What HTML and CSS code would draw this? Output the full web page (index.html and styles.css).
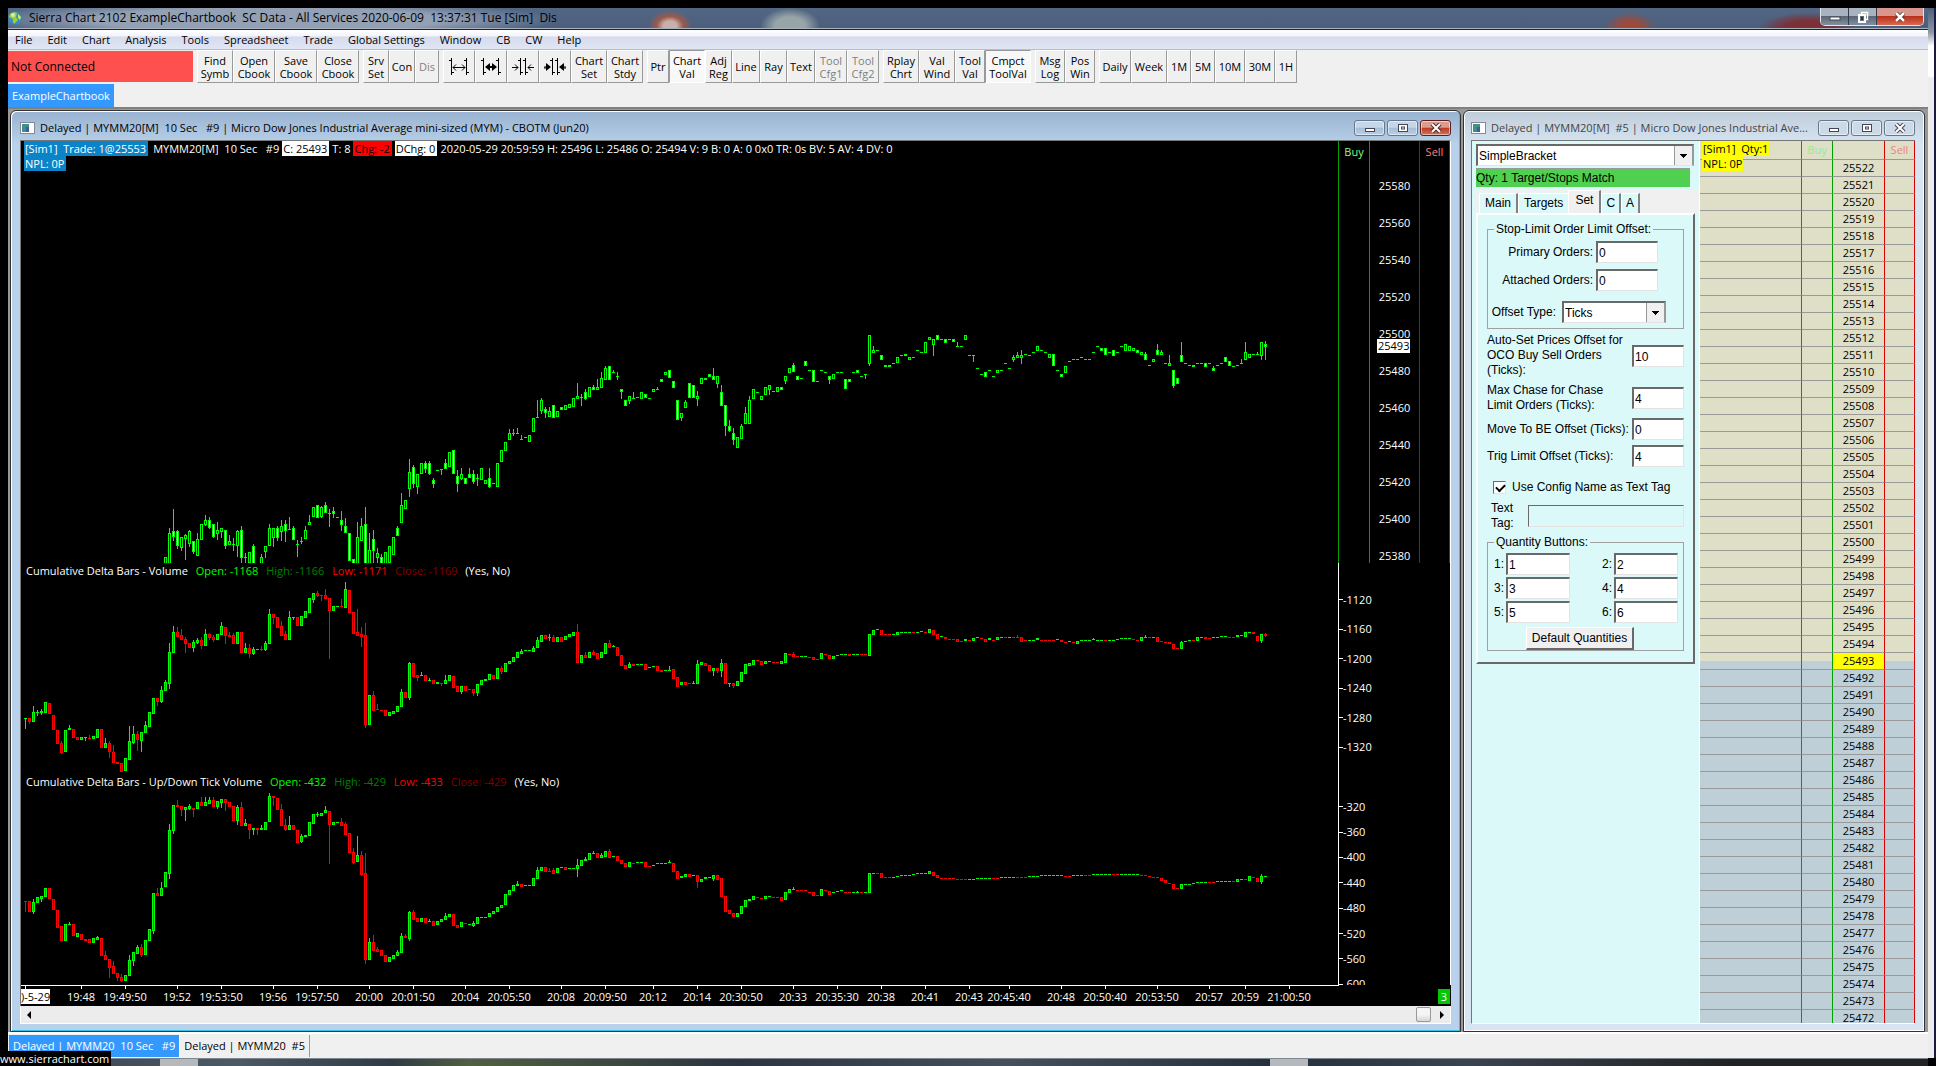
FILE: index.html
```html
<!DOCTYPE html>
<html lang="en">
<head>
    <meta charset="UTF-8">
    <meta name="viewport" content="width=device-width, initial-scale=1.0">
    <title>Sierra Chart 2102 ExampleChartbook</title>
    <link rel="stylesheet" href="styles.css">
</head>
<body>
    <div class="screen">
        <div class="app">
            <header class="titlebar">
                <svg class="app-icon" width="14" height="14" viewBox="0 0 14 14">
                    <circle cx="7" cy="7" r="6.5" fill="#2f8fd0"/>
                    <path d="M2 3 Q6 0 9 2 L8 6 L10 9 L6 13 Q4 10 5 8 L1 6 Z" fill="#9fd02e"/>
                    <path d="M10 3 L13 6 L12 9 L10 7 Z" fill="#d8e84a"/>
                    <circle cx="5" cy="4" r="2" fill="#ffffff" opacity=".6"/>
                </svg>
                <h1>Sierra Chart 2102 ExampleChartbook&nbsp; SC Data - All Services 2020-06-09&nbsp; 13:37:31 Tue [Sim]&nbsp; Dis</h1>
                <div class="caption-buttons">
                    <button aria-label="Minimize"><svg width="12" height="10"><rect x="1" y="5" width="10" height="3" fill="#fff" stroke="#444b55"/></svg></button>
                    <button aria-label="Restore"><svg width="12" height="12"><path d="M4.500 3V1.500H10.500V8.500H9" fill="none" stroke="#fff" stroke-width="1.500"/><rect x="2" y="4" width="6" height="7" fill="none" stroke="#fff" stroke-width="2"/><rect x="4" y="6" width="2" height="3" fill="#333"/></svg></button>
                    <button class="close" aria-label="Close"><svg width="12" height="10"><path d="M2 1 L10 9 M10 1 L2 9" stroke="#4d2a2a" stroke-width="4"/><path d="M2 1 L10 9 M10 1 L2 9" stroke="#fff" stroke-width="2.500"/></svg></button>
                </div>
            </header>

            <nav class="menu">
                <a href="#">File</a><a href="#">Edit</a><a href="#">Chart</a><a href="#">Analysis</a><a href="#">Tools</a><a href="#">Spreadsheet</a><a href="#">Trade</a><a href="#">Global Settings</a><a href="#">Window</a><a href="#">CB</a><a href="#">CW</a><a href="#">Help</a>
            </nav>

            <div class="toolbar">
                <div class="status">Not Connected</div>
                <div class="group">
                    <button class="w36">Find<br>Symb</button>
                    <button class="w42">Open<br>Cbook</button>
                    <button class="w42">Save<br>Cbook</button>
                    <button class="w42">Close<br>Cbook</button>
                </div>
                <div class="group">
                    <button class="w26">Srv<br>Set</button>
                    <button class="w26">Con</button>
                    <button class="w24" disabled>Dis</button>
                </div>
                <div class="group">
                    <button class="w32" aria-label="Widen bars"><svg width="20" height="24"><path d="M2.500 3V20M0 5.500H2M3 17.500H5M17.500 3V20M15 5.500H17M18 17.500H20M4 12.500H16M7 9.500L4 12.500L7 15.500M13 9.500L16 12.500L13 15.500"/></svg></button>
                    <button class="w32" aria-label="Widen range"><svg width="20" height="24"><path d="M2.500 3V20M0 5.500H2M3 17.500H5M17.500 3V20M15 5.500H17M18 17.500H20M5 12.500H15M5 11.500H15"/><path class="solid" d="M4 12L9 8V16ZM16 12L11 8V16Z"/></svg></button>
                    <button class="w32" aria-label="Narrow bars"><svg width="24" height="24"><path d="M9.500 3V20M7 5.500H9M10 17.500H12M14.500 3V20M12 5.500H14M15 17.500H17M1 12.500H7M4 9.500L7 12.500L4 15.500M23 12.500H17M20 9.500L17 12.500L20 15.500"/></svg></button>
                    <button class="w32" aria-label="Narrow range"><svg width="24" height="24"><path d="M9.500 3V20M7 5.500H9M10 17.500H12M14.500 3V20M12 5.500H14M15 17.500H17M1 12H4M20 12H23M1 13H4M20 13H23"/><path class="solid" d="M8 12L3 8V16ZM16 12L21 8V16Z"/></svg></button>
                    <button class="w36">Chart<br>Set</button>
                    <button class="w36">Chart<br>Stdy</button>
                </div>
                <div class="group">
                    <button class="w22">Ptr</button>
                    <button class="w36 pressed">Chart<br>Val</button>
                    <button class="w27">Adj<br>Reg</button>
                    <button class="w28">Line</button>
                    <button class="w27">Ray</button>
                    <button class="w28">Text</button>
                    <button class="w32" disabled>Tool<br>Cfg1</button>
                    <button class="w32" disabled>Tool<br>Cfg2</button>
                </div>
                <div class="group">
                    <button class="w36">Rplay<br>Chrt</button>
                    <button class="w36">Val<br>Wind</button>
                    <button class="w30">Tool<br>Val</button>
                    <button class="w46 pressed">Cmpct<br>ToolVal</button>
                </div>
                <div class="group">
                    <button class="w30">Msg<br>Log</button>
                    <button class="w30">Pos<br>Win</button>
                </div>
                <div class="group">
                    <button class="w32">Daily</button>
                    <button class="w36">Week</button>
                    <button class="w24">1M</button>
                    <button class="w24">5M</button>
                    <button class="w30">10M</button>
                    <button class="w30">30M</button>
                    <button class="w22">1H</button>
                </div>
            </div>

            <div class="books"><button class="book">ExampleChartbook</button></div>

            <main class="mdi">
                <section class="window active">
                    <div class="window-title">
                        <svg width="15" height="12"><rect x=".5" y=".5" width="14" height="11" fill="#fff" stroke="#889"/><rect x="2" y="2" width="7" height="8" fill="#3f8f8a"/><rect x="6" y="5" width="3" height="5" fill="#3c5fa0"/></svg>
                        <h2>Delayed | MYMM20[M]&nbsp; 10 Sec&nbsp;&nbsp; #9 | Micro Dow Jones Industrial Average mini-sized (MYM) - CBOTM (Jun20)</h2>
                        <div class="window-buttons">
                            <button aria-label="Minimize"><svg width="12" height="10"><rect x="1.500" y="5.500" width="9" height="3" fill="#fff" stroke="#445"/></svg></button>
                            <button aria-label="Maximize"><svg width="12" height="10"><rect x="1.500" y="1.500" width="9" height="7" fill="#fff" stroke="#445"/><rect x="4.500" y="4" width="3" height="2" fill="#fff" stroke="#445"/></svg></button>
                            <button class="close" aria-label="Close"><svg width="12" height="10"><path d="M2 1 L10 9 M10 1 L2 9" stroke="#4d2a2a" stroke-width="4"/><path d="M2 1 L10 9 M10 1 L2 9" stroke="#fff" stroke-width="2"/></svg></button>
                        </div>
                    </div>
                    <div class="client chart">
                        <div class="panes plot">
                            <svg id="bars" class="bars"></svg>
                            <div class="pane">
                                <p class="info"><mark class="sim">[Sim1]&nbsp; Trade: 1@25553</mark><span class="symbol">MYMM20[M]&nbsp; 10 Sec&nbsp;&nbsp; #9</span><mark>C: 25493</mark><span>T: 8</span><mark class="chg">Chg: -2</mark><mark>DChg: 0</mark><span>2020-05-29 20:59:59 H: 25496 L: 25486 O: 25494 V: 9 B: 0 A: 0 0x0 TR: 0s BV: 5 AV: 4 DV: 0</span></p>
                                <p class="info"><mark class="sim">NPL: 0P</mark></p>
                            </div>
                            <div class="pane">
                                <p class="study">Cumulative Delta Bars - Volume <b class="open">Open: -1168</b> <b class="high">High: -1166</b> <b class="low">Low: -1171</b> <b class="last">Close: -1169</b> <b>(Yes, No)</b></p>
                            </div>
                            <div class="pane">
                                <p class="study">Cumulative Delta Bars - Up/Down Tick Volume <b class="open">Open: -432</b> <b class="high">High: -429</b> <b class="low">Low: -433</b> <b class="last">Close: -429</b> <b>(Yes, No)</b></p>
                            </div>
                        </div>
                        <div class="panes scales">
                            <div class="pane prices">
                                <div class="buy">Buy</div>
                                <div class="ticks">
                                    <span>25580</span><span>25560</span><span>25540</span><span>25520</span><span>25500</span><span>25480</span><span>25460</span><span>25440</span><span>25420</span><span>25400</span><span>25380</span>
                                    <mark class="last-price">25493</mark>
                                </div>
                                <div class="sell">Sell</div>
                            </div>
                            <div class="pane scale volume"><span>-1120</span><span>-1160</span><span>-1200</span><span>-1240</span><span>-1280</span><span>-1320</span></div>
                            <div class="pane scale tick-volume"><span>-320</span><span>-360</span><span>-400</span><span>-440</span><span>-480</span><span>-520</span><span>-560</span><span>-600</span></div>
                        </div>
                    </div>
                    <div class="times">
                        <svg id="times" class="time-labels"></svg>
                        <mark class="date">)-5-29</mark>
                        <mark class="count">3</mark>
                    </div>
                    <div class="scrollbar">
                        <button aria-label="Scroll left"><svg width="5" height="8"><path d="M4 0V8L0 4Z"/></svg></button>
                        <button class="thumb" aria-label="Scroll"></button>
                        <button aria-label="Scroll right"><svg width="5" height="8"><path d="M1 0V8L5 4Z"/></svg></button>
                    </div>
                </section>

                <section class="window dom">
                    <div class="window-title">
                        <svg width="15" height="12"><rect x=".5" y=".5" width="14" height="11" fill="#fff" stroke="#889"/><rect x="2" y="2" width="7" height="8" fill="#3f8f8a"/><rect x="6" y="5" width="3" height="5" fill="#3c5fa0"/></svg>
                        <h2>Delayed | MYMM20[M]&nbsp; #5 | Micro Dow Jones Industrial Ave...</h2>
                        <div class="window-buttons">
                            <button aria-label="Minimize"><svg width="12" height="10"><rect x="1.500" y="5.500" width="9" height="3" fill="#fff" stroke="#445"/></svg></button>
                            <button aria-label="Maximize"><svg width="12" height="10"><rect x="1.500" y="1.500" width="9" height="7" fill="#fff" stroke="#445"/><rect x="4.500" y="4" width="3" height="2" fill="#fff" stroke="#445"/></svg></button>
                            <button aria-label="Close"><svg width="12" height="10"><path d="M2 1 L10 9 M10 1 L2 9" stroke="#445" stroke-width="4"/><path d="M2 1 L10 9 M10 1 L2 9" stroke="#fff" stroke-width="2"/></svg></button>
                        </div>
                    </div>
                    <div class="client trade">
                        <form class="config">
                            <select class="bracket" aria-label="Trade configuration"><option>SimpleBracket</option></select>
                            <p class="match">Qty: 1 Target/Stops Match</p>
                            <div class="tabs">
                                <button type="button">Main</button><button type="button">Targets</button><button type="button" class="selected">Set</button><button type="button">C</button><button type="button">A</button>
                            </div>
                            <div class="sheet">
                                <fieldset class="limits">
                                    <legend>Stop-Limit Order Limit Offset:</legend>
                                    <div class="row"><label for="primary">Primary Orders:</label><input id="primary" value="0"></div>
                                    <div class="row"><label for="attached">Attached Orders:</label><input id="attached" value="0"></div>
                                    <div class="row offset"><label for="type">Offset Type:</label><select id="type"><option>Ticks</option></select></div>
                                </fieldset>
                                <div class="row split"><label for="oco">Auto-Set Prices Offset for<br>OCO Buy Sell Orders<br>(Ticks):</label><input id="oco" value="10"></div>
                                <div class="row split"><label for="chase">Max Chase for Chase<br>Limit Orders (Ticks):</label><input id="chase" value="4"></div>
                                <div class="row split"><label for="be">Move To BE Offset (Ticks):</label><input id="be" value="0"></div>
                                <div class="row split"><label for="trig">Trig Limit Offset (Ticks):</label><input id="trig" value="4"></div>
                                <div class="row check"><input id="use-name" type="checkbox" checked><label for="use-name">Use Config Name as Text Tag</label></div>
                                <div class="row tag"><label for="tag">Text<br>Tag:</label><input id="tag" disabled></div>
                                <fieldset class="quantities">
                                    <legend>Quantity Buttons:</legend>
                                    <div class="grid">
                                        <label for="q1">1:</label><input id="q1" value="1"><label for="q2">2:</label><input id="q2" value="2">
                                        <label for="q3">3:</label><input id="q3" value="3"><label for="q4">4:</label><input id="q4" value="4">
                                        <label for="q5">5:</label><input id="q5" value="5"><label for="q6">6:</label><input id="q6" value="6">
                                    </div>
                                    <button type="button" class="defaults">Default Quantities</button>
                                </fieldset>
                            </div>
                        </form>
                        <div class="ladder">
                            <table>
                                <thead><tr><th></th><th class="buy">Buy</th><th></th><th class="sell">Sell</th></tr></thead>
                                <tbody id="ladder"></tbody>
                            </table>
                            <p class="position"><mark>[Sim1]&nbsp; Qty:1</mark><br><mark>NPL: 0P</mark></p>
                        </div>
                    </div>
                </section>
            </main>

            <footer class="window-tabs">
                <button class="selected">Delayed | MYMM20&nbsp; 10 Sec&nbsp;&nbsp; #9</button><button>Delayed | MYMM20&nbsp; #5</button>
            </footer>
        </div>
        <div class="desktop"></div>
    </div>
    <div class="taskbar"><i></i><i></i></div>
    <p class="url">www.sierrachart.com</p>
    <script src="charts.js"></script>
</body>
</html>
```

FILE: styles.css
```css
* {
    box-sizing: border-box;
}
body {
    margin: 0;
    padding-top: 8px;
    height: 100vh;
    display: flex;
    flex-direction: column;
    overflow: hidden;
    background-color: #000;
    color: #000;
    font-family: "Open Sans", "Noto Sans", sans-serif;
    font-size: 12px;
    line-height: 16px;
}
h1, h2, p {
    margin: 0;
    font-size: 12px;
    font-weight: normal;
    white-space: nowrap;
}
button {
    margin: 0;
    padding: 0;
    border: none;
    font: inherit;
    color: inherit;
    background: none;
}
b {
    font-weight: normal;
}
mark {
    color: #000;
    background-color: #fff;
}
.screen {
    flex: 1;
    min-height: 0;
    display: flex;
    padding-left: 8px;
}
.app {
    flex: 1;
    min-width: 0;
    display: flex;
    flex-direction: column;
    background-color: #f0f0f0;
}
.desktop {
    width: 8px;
    border-right: 2px solid #1a1a40;
    background: linear-gradient(#4d6079 0, #8a95a0 24px, #fff 38px, #fff 68px, #ececec 70px);
}

/* title bar */
.titlebar {
    height: 21px;
    display: flex;
    align-items: center;
    gap: 7px;
    background:
        radial-gradient(ellipse 290px 20px at 260px 12px, rgba(165, 175, 192, .8) 60%, transparent),
        radial-gradient(ellipse 22px 16px at 662px 18px, #c9b0aa 30%, #9a5a4c 60%, transparent),
        radial-gradient(ellipse 30px 18px at 782px 18px, #98a5a8 50%, transparent),
        radial-gradient(ellipse 26px 16px at 1622px 20px, #9c4a3c 40%, transparent),
        radial-gradient(ellipse 50px 18px at 1800px 22px, #7c3038 50%, transparent),
        linear-gradient(#526784, #4b5f7c);
    border-bottom: 1px solid #aab4c0;
}
.titlebar .caption-buttons {
    display: flex;
    align-self: flex-start;
    margin: 0 4px 0 auto;
    border: 1px solid #e0e5ea;
    border-top: none;
    border-radius: 0 0 5px 5px;
    overflow: hidden;
}
.caption-buttons button {
    width: 28px;
    height: 17px;
    display: flex;
    align-items: center;
    justify-content: center;
    border-right: 1px solid #333d4a;
    background: linear-gradient(#a9b3bf 45%, #5a6675 50%, #8190a0);
}
.caption-buttons .close {
    width: 46px;
    border: none;
    background: linear-gradient(#d9968a 45%, #b8311c 50%, #d9694e);
}

/* menu */
.menu {
    height: 21px;
    display: flex;
    align-items: center;
    gap: 15px;
    padding-left: 7px;
    border-top: 1px solid #222;
    border-bottom: 1px solid #b6bcd0;
    background: linear-gradient(#fff 0, #f2f4fa 6px, #d6dbed 7px, #e1e6f5);
}
.menu a {
    color: #000;
    text-decoration: none;
    font-size: 11px;
}

/* toolbar */
.toolbar {
    height: 34px;
    display: flex;
    gap: 4px;
    padding-bottom: 1px;
    font-size: 11px;
    line-height: 13px;
}
.toolbar .status {
    width: 185px;
    margin: 1px 0;
    padding-left: 3px;
    display: flex;
    align-items: center;
    background-color: #ff5050;
    font-size: 12px;
}
.group {
    display: flex;
}
.group button {
    border: 1px solid #fff;
    border-right-color: #999;
    border-bottom-color: #999;
    display: flex;
    align-items: center;
    justify-content: center;
    text-align: center;
}
.group .pressed {
    border-color: #999 #fff #fff #999;
    background-color: #f8f8f8;
}
.group button:disabled {
    color: #808080;
}
.group svg {
    fill: none;
    stroke: #000;
}
.group .solid {
    fill: #000;
    stroke: none;
}
.w22 { width: 22px; }
.w24 { width: 24px; }
.w26 { width: 26px; }
.w27 { width: 27px; }
.w28 { width: 28px; }
.w30 { width: 30px; }
.w32 { width: 32px; }
.w36 { width: 36px; }
.w42 { width: 42px; }
.w46 { width: 46px; }

.books {
    height: 23px;
    display: flex;
}
.book {
    padding: 0 4px;
    background-color: #3399ff;
    color: #fff;
    font-size: 11px;
}

/* MDI windows */
.mdi {
    flex: 1;
    min-height: 0;
    display: flex;
    gap: 2px;
    padding: 1px 3px 0 2px;
    border-top: 2px solid #808080;
    border-bottom: 2px solid #fff;
    background-color: #999;
}
.window {
    display: flex;
    flex-direction: column;
    padding: 0 9px 7px 7px;
    border: 1px solid #333;
    border-radius: 6px 6px 0 0;
    box-shadow: inset 0 0 0 1px #fff;
    background: linear-gradient(#c0cdd9, #d7e4f2 34px);
    color: #444;
}
.window.active {
    flex: 1;
    min-width: 0;
    padding: 0 9px 7px;
    box-shadow: inset 1px 1px 0 #fff, inset -1px -1px 0 #35c5e8;
    background: linear-gradient(#98b2d0, #b9d1ea 34px);
    color: #000;
}
.dom {
    width: 462px;
}
.window-title {
    height: 29px;
    display: flex;
    align-items: center;
    gap: 5px;
    padding: 4px 0 0;
}
.window-title h2 {
    flex: 1;
    min-width: 0;
    overflow: hidden;
    font-size: 11px;
}
.window-buttons {
    display: flex;
    gap: 2px;
}
.window-buttons button {
    width: 31px;
    height: 16px;
    display: flex;
    align-items: center;
    justify-content: center;
    border: 1px solid #66788c;
    border-radius: 3px;
    box-shadow: inset 0 0 0 1px rgba(255, 255, 255, .5);
    background: linear-gradient(#c5d6e8 45%, #a5bdd6 50%, #b9d0e6);
}
.dom .window-buttons button {
    background: #ccd9e6;
}
.window-buttons .close {
    border-color: #5b2020;
    background: linear-gradient(#dd9c8f 45%, #bb3a24 50%, #d5715a);
}
.client {
    flex: 1;
    min-height: 0;
    display: flex;
    border: 1px solid #777;
    border-bottom: none;
}

/* chart */
.chart {
    background-color: #000;
    color: #fff;
    font-size: 11px;
    border-right-color: #fff;
}
.panes {
    position: relative;
    display: grid;
    grid-template-rows: minmax(0, 2fr) minmax(0, 1fr) minmax(0, 1fr);
}
.plot {
    flex: 1;
    min-width: 0;
}
.scales {
    width: 112px;
}
.bars {
    position: absolute;
    width: 100%;
    height: 100%;
}
.bars path {
    shape-rendering: crispEdges;
}
.pane {
    position: relative;
    min-width: 0;
}
.info {
    display: flex;
    gap: 3px;
    padding-left: 3px;
    font-size: 11px;
    line-height: 15px;
}
.info mark {
    padding: 0 2px 0 1px;
}
.info .sim {
    background-color: #0a84c8;
    color: #fff;
}
.info .symbol {
    padding-left: 2px;
}
.info .chg {
    background-color: #ff0000;
}
.study {
    padding-left: 5px;
    font-size: 11px;
}
.study b {
    margin-left: 5px;
}
.study .open { color: #00ff00; }
.study .high { color: #008000; }
.study .low { color: #ff0000; }
.study .last { color: #800000; }

.prices {
    display: flex;
    overflow: hidden;
    border-left: 1px solid #00a000;
}
.prices .buy, .prices .sell {
    width: 31px;
    padding-top: 3px;
    border-right: 1px solid #00a000;
    text-align: center;
    color: #80ff80;
}
.prices .sell {
    border-left: 1px solid #c80000;
    border-right-color: #c80000;
    color: #ff8080;
}
.ticks {
    position: relative;
    flex: 1;
    display: flex;
    flex-direction: column;
    padding-top: 26px;
    margin-bottom: -12px;
}
.ticks span, .scale span {
    flex: 1 0 0;
    display: flex;
    align-items: center;
}
.ticks span {
    justify-content: center;
}
.last-price {
    position: absolute;
    top: 198px;
    left: 7px;
    padding: 0 1px;
    line-height: 14px;
}
.scale {
    display: flex;
    flex-direction: column;
    overflow: hidden;
    border-left: 1px solid #fff;
}
.scale span::before {
    content: "";
    width: 4px;
    height: 1px;
    background-color: #fff;
}
.volume {
    padding: 22px 0 12px;
}
.tick-volume {
    padding-top: 20px;
    margin-bottom: -12px;
}
.times {
    position: relative;
    height: 21px;
    border-left: 1px solid #777;
    background-color: #000;
}
.time-labels {
    width: 100%;
    height: 100%;
    display: block;
}
.time-labels text {
    fill: #fff;
    font-size: 11px;
    text-anchor: middle;
}
.time-labels path {
    stroke: #fff;
    fill: none;
    shape-rendering: crispEdges;
}
.date, .count {
    position: absolute;
    left: 0;
    top: 4px;
    line-height: 15px;
    font-size: 11px;
}
.count {
    left: auto;
    right: 1px;
    padding: 0 3px;
    background-color: #00c800;
    color: #fff;
}
.scrollbar {
    height: 18px;
    display: flex;
    justify-content: space-between;
    border: 1px solid #fff;
    border-top: none;
    background-color: #ececec;
}
.scrollbar button {
    width: 17px;
}
.scrollbar .thumb {
    width: 15px;
    margin: 1px 2px 1px auto;
    border: 1px solid #999;
    border-radius: 2px;
    background: linear-gradient(#f5f5f5 50%, #d5d5d5);
}

/* trade panel */
.trade {
    color: #000;
    border-bottom: 1px solid #fff;
    border-right: none;
}
.config {
    width: 228px;
    padding: 3px 4px;
    background-color: #dbf9f9;
    border-right: 1px solid #fff;
    font-family: "Liberation Sans", Arial, sans-serif;
    line-height: 15px;
}
.config input, .config select {
    height: 22px;
    margin: 0;
    border: 2px solid #696969;
    border-right: 1px solid #e3e3e3;
    border-bottom: 1px solid #e3e3e3;
    border-radius: 0;
    background-color: #fff;
    color: #000;
    font: inherit;
    padding: 1px 1px 0;
}
.config select {
    appearance: none;
    border-right: 2px solid #999;
    background:
        linear-gradient(#000, #000) right 5px top 8px / 7px 1px no-repeat,
        linear-gradient(#000, #000) right 6px top 9px / 5px 1px no-repeat,
        linear-gradient(#000, #000) right 7px top 10px / 3px 1px no-repeat,
        linear-gradient(#000, #000) right 8px top 11px / 1px 1px no-repeat,
        linear-gradient(#999, #999) right 17px top 0 / 1px 100% no-repeat,
        linear-gradient(#f0f0f0, #f0f0f0) right top / 17px 100% no-repeat,
        #fff;
}
.config .bracket {
    width: 218px;
    display: block;
}
.match {
    width: 214px;
    margin: 2px 0 3px;
    padding: 1px 0;
    border-top: 1px solid #999;
    background-color: #50d050;
    line-height: 16px;
}
.tabs {
    display: flex;
    align-items: flex-end;
    padding-left: 3px;
    margin-right: -4px;
    background-color: #f0f0f0;
}
.tabs button {
    height: 20px;
    padding: 0 4px;
    border-left: 1px solid #fff;
    border-top: 1px solid #fff;
    border-right: 2px solid #808080;
    background-color: #dbf9f9;
}
.tabs button:nth-child(-n + 2) {
    padding: 0 5px;
}
.tabs button:nth-child(2) {
    border-right: none;
}
.tabs .selected {
    height: 23px;
    padding: 0 6px 4px;
    background-color: #f0f0f0;
}
.sheet {
    width: 219px;
    height: 451px;
    display: flex;
    flex-direction: column;
    gap: 4px;
    padding: 7px 9px;
    border: 2px solid #fff;
    border-right-color: #696969;
    border-bottom-color: #696969;
}
.config fieldset {
    margin: 0;
    padding: 0;
    border: 1px solid #a0a0a0;
    min-width: 0;
}
.config legend {
    margin-left: 6px;
    padding: 0 2px;
}
.row {
    display: flex;
    align-items: center;
    gap: 3px;
}
.limits {
    height: 107px;
}
.limits .row {
    justify-content: flex-end;
    margin: 4px 25px 6px 0;
    white-space: nowrap;
}
.limits input {
    width: 62px;
}
.limits .offset {
    margin: 10px 17px 0 0;
    gap: 6px;
}
.limits select {
    width: 104px;
}
.split {
    justify-content: space-between;
    margin-bottom: 1px;
    white-space: nowrap;
}
.split input {
    width: 52px;
}
.check {
    gap: 6px;
    padding: 8px 0 2px 6px;
}
.config .check input {
    appearance: none;
    width: 13px;
    height: 13px;
    border-width: 1px;
    padding: 0;
}
.check input:checked::before {
    content: "";
    display: block;
    width: 7px;
    height: 4px;
    margin: 2px 0 0 2px;
    border-left: 2px solid #000;
    border-bottom: 2px solid #000;
    transform: rotate(-45deg);
}
.tag {
    gap: 14px;
    padding-left: 4px;
}
.tag input {
    flex: 1;
    min-width: 0;
}
.config .tag input:disabled {
    background-color: #dbf9f9;
    border-width: 1px;
}
.grid {
    display: grid;
    grid-template-columns: 16px 64px 40px 64px;
    gap: 2px;
    align-items: center;
    text-align: right;
    padding-top: 3px;
}
.grid input {
    min-width: 0;
}
.defaults {
    display: block;
    width: 108px;
    height: 23px;
    margin: 4px 0 0 38px;
    border: 1px solid #fff;
    border-right: 2px solid #696969;
    border-bottom: 2px solid #696969;
    background-color: #f0f0f0;
    white-space: nowrap;
}

/* price ladder */
.ladder {
    position: relative;
    flex: 1;
    min-width: 0;
    overflow: hidden;
    font-size: 11px;
    line-height: 16px;
    background-color: #dfdec7;
}
.ladder table {
    width: 100%;
    table-layout: fixed;
    border-collapse: separate;
    border-spacing: 0;
    text-align: center;
}
.ladder th, .ladder td {
    height: 17px;
    padding: 0;
    border-bottom: 1px solid #999;
    border-right: 1px solid #00a000;
    font-weight: normal;
}
.ladder th {
    height: 19px;
}
.ladder th:nth-child(1) { width: 102px; }
.ladder th:nth-child(2) { width: 31px; }
.ladder th:nth-child(3) { width: 52px; }
.ladder th:nth-child(n + 3), .ladder td:nth-child(n + 3) {
    border-right-color: #d80000;
}
.ladder .buy {
    color: #90ee90;
}
.ladder .sell {
    color: #f08080;
}
.ladder .last td {
    background: linear-gradient(#dfdec7 8px, #bfcfd8 8px);
}
.ladder .last td:nth-child(3) {
    background: #ffff00;
}
.ladder .below td {
    background-color: #bfcfd8;
}
.position {
    position: absolute;
    left: 2px;
    top: 0;
    font-size: 11px;
    line-height: 15px;
}
.position mark {
    padding: 0 1px;
    background-color: #ffff00;
}

/* bottom tabs */
.window-tabs {
    height: 24px;
    display: flex;
    font-size: 11px;
    padding: 1px 0 1px 1px;
}
.window-tabs button {
    padding: 0 4px;
    border-right: 1px solid #999;
}
.window-tabs .selected {
    background-color: #3399ff;
    border-right-color: #fff;
    color: #fff;
}
.taskbar {
    height: 8px;
    margin: 0 8px;
    display: flex;
    align-items: flex-end;
    justify-content: space-between;
    padding: 0 620px 0 152px;
    border-top: 1px solid #7d8790;
    background: linear-gradient(90deg, #37424f, #4c5a66 12%, #2f3a44 20%, #51603f 24%, #2b3440 38%, #46505c 52%, #25303c 66%, #3a4350 76%, #222 90%);
}
.taskbar i {
    width: 38px;
    height: 7px;
    background-color: #b5b9bd;
}
.url {
    position: absolute;
    left: 0;
    bottom: 0;
    padding-right: 2px;
    line-height: 15px;
    font-size: 11px;
    background-color: #000;
    color: #fff;
}
```

FILE: charts.js
```js
// One token per bar: u/d = up or down, then body top-bottom, then :high-low for the wick.
// "*n" repeats a token, "-" skips a bar.
const PRICE = `u416-430 u392-430:387-430 d390-395:368-399 d390-404:389-407 u396-406:396-409 u394-397:393-418 u390-402:389-405 d400-410:400-412
u398-414:392-414 u383-398 u379-383:374-384 d379-386:376-387 d383-395:383-396 u389-392:381-398 u387-390:387-396 d389-404:389-407
u400-403:394-403 u403:397-409 u390-404:389-415 d389-416:385-422 u416:412-422 u411-421 d405-425:403-425 - u416-430:413-430 u405-410:405-416
u387-404:383-404 u387-396:387-405 d387-396:385-399 u385-390:379-399 d383-389:379-400 u388:376-388 d387-398:385-398 u403:399-415 u400:396-402
u389-397:385-397 u381-383:374-383 u366-375 d364-376 u366-375:365-376 d364-371:361-371 u372:368-385 d370-372:366-376 u376 d379-383:370-389
d385-391:377-391 d392-419 d418-425 u396-430:381-430 u385-399:377-399 d383-430:366-430 u409-430:392-430 d398-409:389-422 u412-416:407-422
d416-430:413-430 u411-430 u405-421 u396-413 d387-394:385-394 u364-381:352-381 u359-367 u331-347:318-355 d326-342:324-346 u333-345:333-352
u322-332 d322-327:320-331 d322-332:320-333 d339-342:337-346 u329 u328:328-333 d322-327:318-327 u311-325 d309-332 d335-342:329-350
u333-337:327-338 d337-342 d333-336:327-336 d333-340:329-342 u337:333-344 u327-338 u339-342 d337-345:327-346 u342 u322-345 u309-320 u301-309
u292-298:288-298 u292:288-294 u292:287-292 u298:294-298 u296 u294-300 u277-290 u276:259-276 u259-269:257-272 d268-271:266-276 u270-275:266-275
d264-276 u270-275 d266-268 u264-268 u263-266 u257-265 u255-257:242-257 u256:253-264 d251-257:248-258 u246-255 d246-248:244-248 u246-248:238-248
u237-246:231-246 u227-238:225-238 d225-238 u231:229-231 u235:231-238 d248-250:248-257 d259-264 u255-259:255-262 u257:251-257 u256 u251-257
d253-256 u257 u248-250 u248:246-248 d238-240 u231-233 d229-236 d240-246 d259-278 u272-276:272-279 u261-266:259-266 d242-256 d244-256
u255-257:250-264 u237-242 u237-238 d233-235 d235-238:227-238 u235-242:235-246 d251-264:244-264 d264-284:264-294 d285-289:279-290
d292-298:287-303 u296-306 u285-297:283-297 u272-282:266-282 u259-282:255-282 u248-257 u251 u255-258 u246-253 u244-248:244-253 u250 u246-250
d246-248 u235-239:235-242 u227-231 d224-230:222-230 d235-238 u237 d220-224 u229 d229-240 u240 u229 u231 d235-238:235-242 u233-237 u231*2
d238-247 d238-240 u231 d229-231 u235 u233:233-237 u194-222:194-224 u209-211:205-211 u209 d214-218 u224-225*2 u222 u216-221 u214 u213-214
u216-218 u216 u209 u211 u201-211 u196-198 u198-203:198-214 d194-198 u198 d198-201 u198 d198-200 u205:201-205 u205 u194-198 u214 u214:214-220
u227 u233 d231-235 u229 u235 u229-231 u229 u222 u227 u216-218:214-220 u214-216:211-216 u214-216:209-222 u213 u214 u211 u205-209 u209 u211
u213-216 d213-224 u229 d233-235 u225-231 u220 u218*2 u216 u218*2 u211 u205 d207-209 d207-213 u211 d209-214 u211 u205 u203-209 u205-209
u207-209 d209-211 u211-213 d213-218:211-218 u224 u218-220 d209-213:203-213 u211-213:209-213 u222 u222-224:214-224 d229-244:229-246 d237-242
d214-220:201-220 u222 u224 u224-225 u222*2 d222-225 u222 d227-229:225-229 u224 u222 d216-220 d220-224 u225 u224 u222:218-222 u211-218:201-218
u213-216 u213 u213:211-213 u201-214:201-218 d203-205:200-218`;

const VOLUME = `u577:577-587 d577-580:577-582 u571-580:565-580 u571:569-574 u570-571:568-573 u561-571 d562-572 d574-588 d589-602 d602-611:600-612
u589-610 u587-588:584-588 d588-596 d596-598 u596-598 u596:596-599 d597:594-597 u595-597 u588-596 d588-606 u602-606:597-606 d602-610:600-616
d611-621:604-621 d621-622 d622-630 u617-629 u600-618:585-618 u593-601:585-602 d593-598:590-609 u591-599:591-610 u584-591:580-591 u571-585
u557-572 d557-560:557-564 u549-560:545-561 u541-549:539-549 u511-542:502-547 u491-511:485-511 d491-495:486-495 d494-498:488-498
d498-502:496-511 d502-506 u501-506:499-510 u499-501:497-502 d499-504:496-507 u493-504:488-504 d493-496:492-498 d496-498:494-500 u493-498
u485-493:481-493 d486-494:486-502 d494-495:491-495 d494-502:492-502 u491-502 d491-511 u507-511:502-511 d507-512:503-516 u508-512:506-513
u508 d508:505-509 u502-508:500-509 u473-502:468-502 d473-476:473-482 d476-486 d485-494:480-494 d493-498:490-498 u476-498:470-498 u476:476-478
d476-484 u475-484 u470-476 u457-471 u452-458:452-461 d452-454:450-455 d454:454-459 d454-457:448-457 d457-469:457-517 u465-469 u465 d465:458-465
u448-466:441-466 d449-471 d471-492 d491-494:468-494 d493-495:486-505 d494-583:482-586 u554-583 d554-569:550-569 d568:563-568 d569 d569-574
u571-574 u570-572 u565-570 u551-565:548-565 d551-556 u522-556:521-558 d522-535 d534-536:534-539 u534:531-534 d534-539 u539:537-539
d539-542 u541-542 d542:542-544 u539-542:534-542 u534-539 d535-546 d545-550 u545-550:545-552 d545-549 d548 d548-551:548-554 u543-551:543-554
u539-543 u538-539 u533-538 d534-537 u527-537 d527-530:525-532 u522-530 u520-522 u516-520 u511-516 u510-512:508-512 u509*2 u507-510:505-510
u499-506:496-506 u494-500 d494-497 u496:493-499 d496-500:494-500 u496-500 d496-500 u495-498 u493-495 u491-494 d491-521:483-521 u514-521
d514-516:511-516 u511-516 d511-513:509-513 d512-517 u511-516 u502-512 d502-506:499-506 u505:504-505 d506-514 d514-524 d524-527
u523-526:521-526 d523-524 u523*2 d523-528 u526 u525 d525-529 d529-530 u529 u529:525-529 d528-537 d536-545 u541-543 d541-543 d542 u542:540-542
u523-542:519-542 u521-523 d522-524 d524-529 u527-529:527-534 d527-529:527-531 u522-529:518-535 d522-542 u542:542-545 d542-544:542-546
u540-544 u531-540 u523-532 u522-524 u519-523 d519 d520-523 u520-522 u520 d521*2 u520-522 u512-521 d513 d513-515:511-515 d515 u515*2 d516
d516-518 d518 u512-517 d513 d514-517 u515-517 u514 u513*2 d513-514 u513*2 d513*2 u493-514 u489-493 u488 d489-493 d493*2 u493 u491-493 u491*3
d491 u491 u490 d491 u488-491 d489-493 d493-497 u495 d496-497 d498*2 d498-500 d500 u498-499 d499 u497-499 u496 d497 d498-500 u497-498 d499
u496-498 u496 d496 u496 d496 d496:494-496 d496-500 d499 u499*2 u497-498 d499*4 u498 d499-500 d501 u500 d501 u500-502 u499*3 u498:497-498
u499*2 d499 u499*2 u498 u497*3 d498 d499 u496-499 u496:494-496 d496 u496 d496-500 d500 d501 d501-502 d503-507 d507 u501-507:500-507 u500 u499
d499 u496-499 u496 d496-497 d497 u496*2 u495*2 d496*2 u494-495 u494 u491-495 u491 d491-492 d495-499 u493-499:493-501 d493-494:492-495`;

const TICK_VOLUME = `d760:760-770 d760-770 u761-770:758-772 u756-761 u755-757:755-760 u747-755 d747-757 d758-768 d769-786 d785-799 u783-799
u783:781-783 d783-794 u792-795 d793-798 d798-799 d798-801 u797-801 u796-798:795-798 d797-814 d814-818:810-818 d818-826:818-836 d825-832:820-832
d832-836:832-839 d836-839:833-840 u834-839 u819-834:814-834 u811-819:811-824 u806-812:804-812 d806-813:803-815 u799-813 u788-799 u752-789:752-792
d752-754:747-754 u747-754:741-754 u731-745 u689-732:683-737 u664-689:664-692 d664-665:659-665 d665-668:665-674 u666-668:666-679 u665-667:663-668
d667-668:667-675 u661-667 d661-664:656-664 u661-664:656-664 u659-662:656-662 d659-665:656-665 u660-665:660-667 u658-661:658-666 d658-661:658-669
d661-665 d665-679 u666-679:664-683 d666-684:661-684 u682-684:678-684 d683-688:683-697 u687-688:687-693 d687-688:687-693 u687-688:684-688
u681-688 u655-680:652-680 d655-656:655-664 d657-668 d668-684:663-684 d684-688:678-689 u684-688:675-688 d684-688 d689-701 u695-700:693-701
u694-695 u681-694 u673-682 u673:671-675 u672-674 u669-671:665-671 d670-683:670-722 u681-683 u681 d681-684:677-684 d683-693:681-693 d692-711
d711-721:707-722 u714-720:695-720 d714-733:710-734 d732-818:712-822 u801-818:797-818 d801-809:794-809 d808-810:806-810 d809-814 d814-820
u816-820 u814-817 u811-814:809-814 u795-811:792-811 d795-796:793-796 u771-797:770-799 d771-778:769-778 d777-780 u777-780 d777-781 u780:778-780
d780-784 u780-783 u778-780 u775-778:772-778 u773-775 d773-784 d784-786 u781-785 d782 u783 u782-784:780-785 u776-782 u776*2 u772-775 u770-772
u766-770 u764-766 u753-763 u749-753 u744-749 u743-744:740-744 d743-745 u744*2 u737-744 u729-737:726-737 u726-729 d726-730 d730:727-730
d729-732:727-732 u727-731 u726 d726-728 u727*2 u724-727:718-735 u719-724 u718-719:716-719 u712-718 u712:710-712 d712-716 u714-716:712-716
u710-715 d710-716:708-716 u715 d715-719 d719-722 d722-725 u721-725 d722 u721*2 d721-725 d725 u724 u722*3 u721:719-721 d722-730 d730-737
u735-736 u733-735 d733-735 u734 d734-740:734-746 u738-740 u736-737 u736 u734-737:734-739 d734-738 d737-755 d755-770 d769-772 d772-775 u772-775
u765-772 u759-765 u758-759 u755-758 d756 d757 u755-757 u755 d756*2 d756-759 u751-758 u748-751 u748:746-748 d749*3 d751 d751-754 d754 u748-754
d749 d750-753 u751 u750 u749 d751*2 u751 u751:750-751 d751 u751 u732-751 u732 d732 d732-736 d736*2 u736 u735 u734*3 u733 u732*3 u730-732
d731-734 d734-736 d737*4 d738*3 u738*2 u737*4 d737*2 u736*4 d736*3 u735*3 u734*6 d735*2 u734*3 d734*2 u733*5 d733*2 u733*5 d734*2 d735 d736*2
d737-739 d739-741 d742 d743-747 d747 u743-747 u743*2 u742 u741*3 d741*2 u740*4 d740 u738-740 u738 d738 u735-739 d736 d737-740 u735-740:733-742 u735`;

const TIMES = [
    [4, ""], [60, "19:48"], [104, "19:49:50"], [156, "19:52"], [200, "19:53:50"], [252, "19:56"], [296, "19:57:50"],
    [348, "20:00"], [392, "20:01:50"], [444, "20:04"], [488, "20:05:50"], [540, "20:08"], [584, "20:09:50"],
    [632, "20:12"], [676, "20:14"], [720, "20:30:50"], [772, "20:33"], [816, "20:35:30"], [860, "20:38"],
    [904, "20:41"], [948, "20:43"], [988, "20:45:40"], [1040, "20:48"], [1084, "20:50:40"], [1136, "20:53:50"],
    [1188, "20:57"], [1224, "20:59"], [1268, "21:00:50"]
];

function parseBars(text) {
    const bars = [];
    text.split(/\s+/).forEach(token => {
        const [bar, count] = token.split("*");
        const m = bar.match(/([ud])(\d+)(?:-(\d+))?(?::(\d+)-(\d+))?/);
        for (let i = 0; i < (count || 1); i++) bars.push(m);
    });
    return bars;
}

// Each bar is three pixels wide, with a one pixel outline round its fill.
function drawBars(text, start, colors, limit) {
    const paths = {};
    const box = (color, x, y, w, h) => {
        h = Math.min(h, limit - y);
        if (h > 0) paths[color] = (paths[color] || "") + `M${x} ${y}h${w}v${h}h${-w}z`;
    };
    const fills = [];
    parseBars(text).forEach((m, i) => {
        if (!m) return;
        const x = 4 * (start + i) + 3;
        const top = Number(m[2]);
        const bottom = Number(m[3] || m[2]);
        const color = colors[m[1]];
        if (m[4]) box(color.line, x + 1, Number(m[4]), 1, m[5] - m[4] + 1);
        box(color.line, x, top, 3, bottom - top + 1);
        if (bottom - top > 1) fills.push([color.fill, x + 1, top + 1, 1, bottom - top - 1]);
    });
    let html = Object.keys(paths).map(c => `<path fill="${c}" d="${paths[c]}"/>`).join("");
    Object.keys(paths).forEach(c => delete paths[c]);
    fills.forEach(f => box(...f));
    html += Object.keys(paths).map(c => `<path fill="${c}" d="${paths[c]}"/>`).join("");
    return html;
}

const priceColors = { u: { line: "#00ff00", fill: "#000000" }, d: { line: "#00ff00", fill: "#ffffff" } };
const deltaColors = { u: { line: "#00ff00", fill: "#008000" }, d: { line: "#ff0000", fill: "#800000" } };

document.getElementById("bars").innerHTML =
    drawBars(PRICE, 35, priceColors, 422) +
    drawBars(VOLUME, 0, deltaColors, 900) +
    drawBars(TICK_VOLUME, 0, deltaColors, 900);

document.getElementById("times").innerHTML =
    `<path d="M0 .5H1318${TIMES.map(t => `M${t[0] + 0.5} 1V4`).join("")}"/>` +
    TIMES.map(t => `<text x="${t[0]}" y="16">${t[1]}</text>`).join("");

let rows = "";
for (let price = 25522; price >= 25472; price--) {
    const name = price === 25493 ? "last" : price < 25493 ? "below" : "";
    rows += `<tr class="${name}"><td></td><td></td><td>${price}</td><td></td></tr>`;
}
document.getElementById("ladder").innerHTML = rows;
```
